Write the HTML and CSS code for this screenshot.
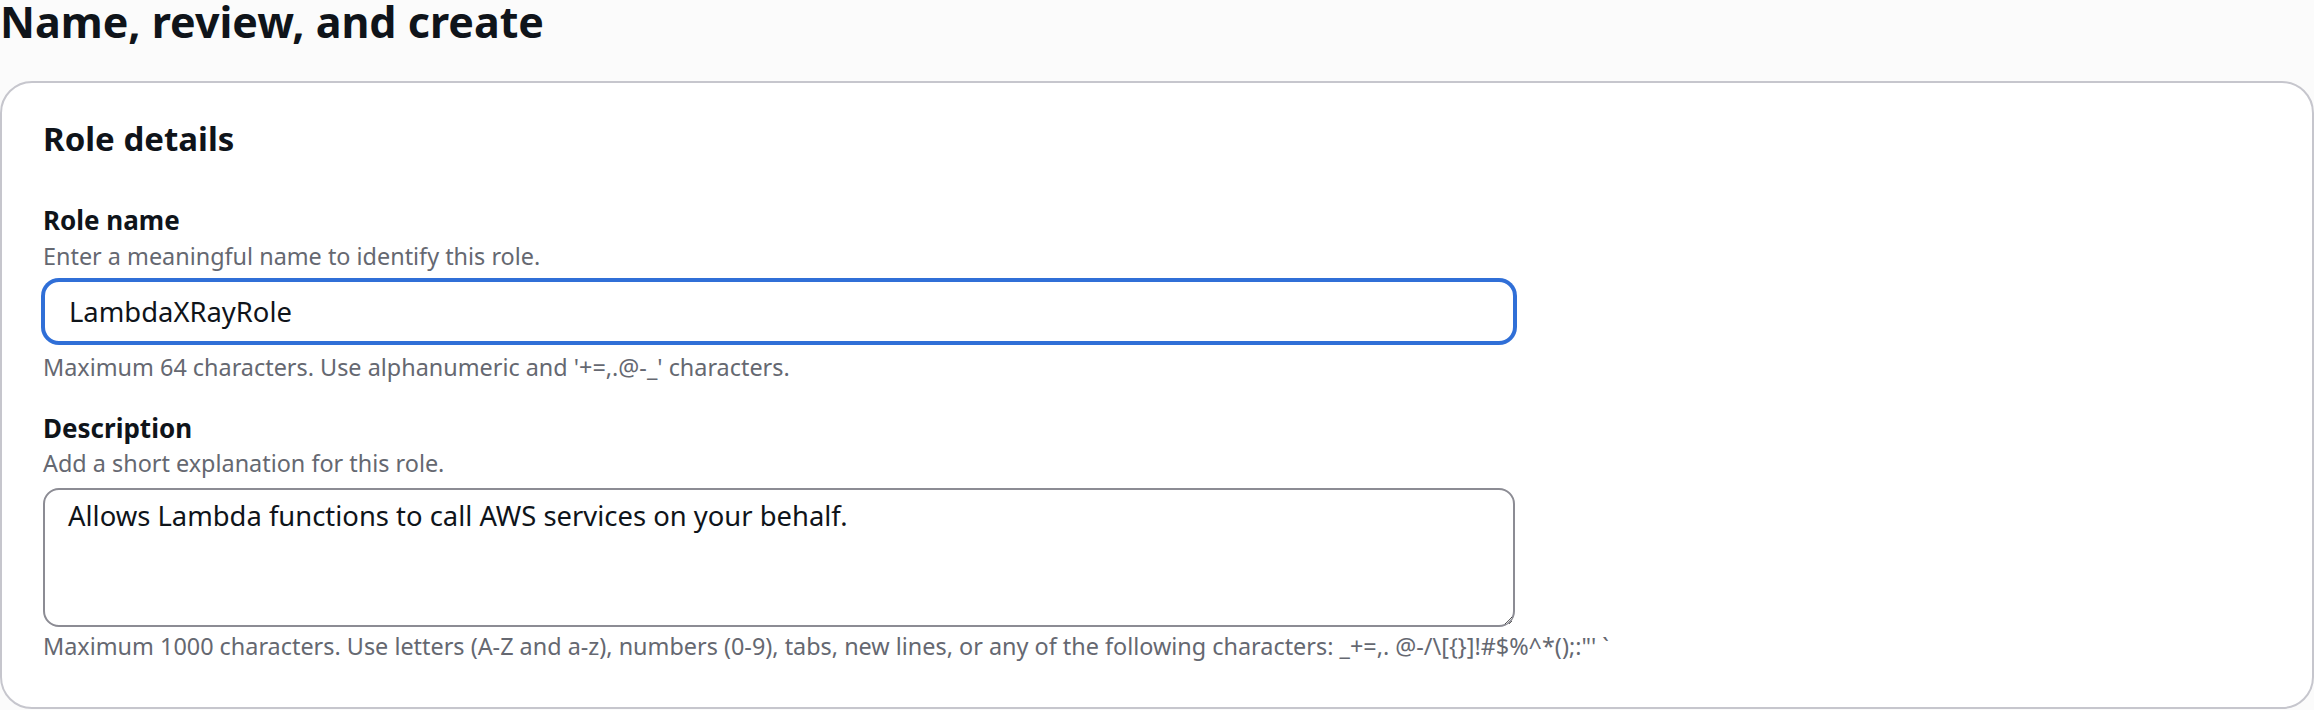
FILE: index.html
```html
<!DOCTYPE html>
<html lang="en">
<head>
<meta charset="utf-8">
<title>Name, review, and create</title>
<link rel="stylesheet" href="styles.css">
</head>
<body>
<h1 class="page-title">Name, review, and create</h1>
<section class="card">
  <h2 class="card-title">Role details</h2>
  <div class="field">
    <label class="field-label" for="role-name">Role name</label>
    <div class="field-desc">Enter a meaningful name to identify this role.</div>
    <input class="text-input focused" id="role-name" type="text" value="LambdaXRayRole">
    <div class="field-constraint">Maximum 64 characters. Use alphanumeric and '+=,.@-_' characters.</div>
  </div>
  <div class="field field-second">
    <label class="field-label" for="role-desc">Description</label>
    <div class="field-desc">Add a short explanation for this role.</div>
    <textarea class="text-area" id="role-desc">Allows Lambda functions to call AWS services on your behalf.</textarea>
    <div class="field-constraint field-constraint-area">Maximum 1000 characters. Use letters (A-Z and a-z), numbers (0-9), tabs, new lines, or any of the following characters: _+=,. @-/\[{}]!#$%^*();:"' `</div>
  </div>
</section>
</body>
</html>
```

FILE: styles.css
```css
html, body {
  margin: 0;
  padding: 0;
  background: #fbfbfb;
}
body {
  font-family: "Noto Sans", "Open Sans", sans-serif;
  color: #0f141a;
  width: 2314px;
  height: 710px;
  overflow: hidden;
}
.page-title {
  margin: 0;
  font-size: 43px;
  line-height: 44px;
  font-weight: 700;
  color: #0f141a;
}
.card {
  margin-top: 37px;
  background: #ffffff;
  border: 2px solid #c6c6cd;
  border-radius: 32px;
  padding: 36px 41px 46px 41px;
  box-sizing: border-box;
  width: 2314px;
}
.card-title {
  margin: 0;
  font-size: 33px;
  line-height: 40px;
  font-weight: 700;
}
.field {
  display: flex;
  flex-direction: column;
  align-items: flex-start;
  margin-top: 43px;
}
.field-second {
  margin-top: 28px;
}
.field-label {
  font-size: 26px;
  line-height: 36px;
  font-weight: 700;
}
.field-desc {
  margin-top: 3px;
  font-size: 23.4px;
  line-height: 30px;
  color: #656871;
}
.field-second .field-desc {
  margin-top: 2px;
}
.field-constraint {
  margin-top: 9px;
  font-size: 23.4px;
  line-height: 30px;
  color: #656871;
}
.field-constraint-area {
  margin-top: 4px;
}
.text-input,
.text-area {
  font-family: "Noto Sans", "Open Sans", sans-serif;
  font-size: 27.4px;
  color: #0f141a;
  box-sizing: border-box;
  width: 1472px;
  margin: 0;
  background: #ffffff;
  outline: none;
}
.text-input {
  margin-top: 9px;
  height: 63px;
  padding: 0 24px;
  border: 2px solid #306fd7;
  border-radius: 16px;
  box-shadow: 0 0 0 2px #306fd7;
}
.text-area {
  margin-top: 10px;
  height: 139px;
  padding: 8px 23px;
  line-height: 36px;
  border: 2px solid #8c8c94;
  border-radius: 16px;
  resize: vertical;
  display: block;
}
```
